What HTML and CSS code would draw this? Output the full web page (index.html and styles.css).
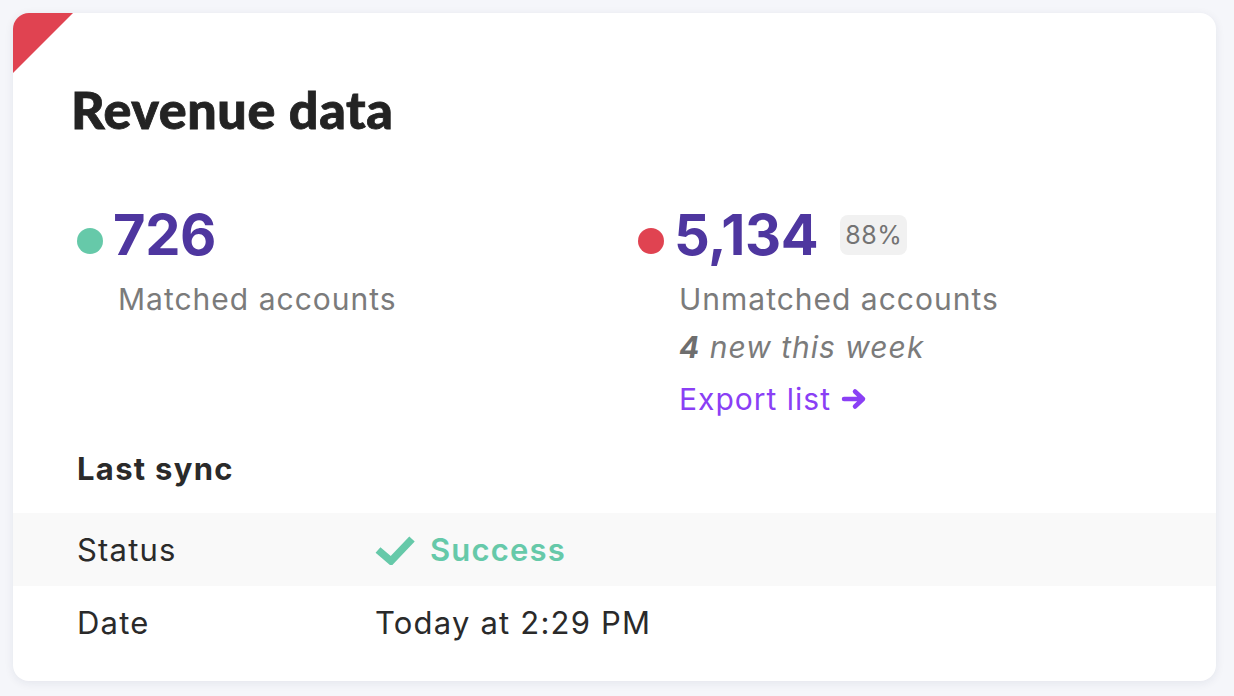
FILE: index.html
```html
<!DOCTYPE html>
<html>
<head>
<meta charset="utf-8">
<link rel="stylesheet" href="styles.css">
</head>
<body>
<div class="card">
  <div class="corner"></div>
  <h1 class="title">Revenue data</h1>
  <div class="stats">
    <div class="stat">
      <div class="stat-head">
        <span class="dot dot-green"></span>
        <span class="num">726</span>
      </div>
      <div class="stat-body">
        <div class="label">Matched accounts</div>
      </div>
    </div>
    <div class="stat">
      <div class="stat-head">
        <span class="dot dot-red"></span>
        <span class="num">5,134</span>
        <span class="badge">88%</span>
      </div>
      <div class="stat-body">
        <div class="label">Unmatched accounts</div>
        <div class="note"><b>4</b> new this week</div>
        <a class="export">Export list <svg class="arrow" width="26" height="22" viewBox="0 0 26 22"><path d="M3 11H22M14 3.5L22 11L14 18.5" fill="none" stroke="#8a3ff5" stroke-width="4.5" stroke-linecap="round" stroke-linejoin="round"/></svg></a>
      </div>
    </div>
  </div>
  <div class="sync-title">Last sync</div>
  <div class="rows">
    <div class="row row-alt">
      <div class="row-label">Status</div>
      <div class="row-value success"><svg class="check" width="40" height="30" viewBox="0 0 40 30"><path d="M3 15L16 26L37 4" fill="none" stroke="#66c9a9" stroke-width="7.5"/></svg>Success</div>
    </div>
    <div class="row">
      <div class="row-label">Date</div>
      <div class="row-value">Today at 2:29 PM</div>
    </div>
  </div>
</div>
</body>
</html>
```
FILE: styles.css
```css
html, body {
  margin: 0;
  padding: 0;
}
body {
  background: #f5f6fa;
  padding: 13px 18px 15px 13px;
  font-family: Inter, "Noto Sans", sans-serif;
}
.card {
  position: relative;
  width: 1203px;
  height: 668px;
  background: #ffffff;
  border-radius: 16px;
  box-shadow: 0 2px 10px rgba(30, 40, 80, 0.08);
  overflow: hidden;
  box-sizing: border-box;
  padding-top: 71px;
}
.corner {
  position: absolute;
  left: 0;
  top: 0;
  width: 0;
  height: 0;
  border-top: 60px solid #e04351;
  border-right: 60px solid transparent;
}
.title {
  margin: 0;
  padding-left: 58px;
  font-family: Lato, sans-serif;
  font-weight: 900;
  font-size: 52px;
  line-height: 50px;
  color: #232323;
  letter-spacing: 0.6px;
  -webkit-text-stroke: 0.8px #232323;
}
.stats {
  display: grid;
  grid-template-columns: 561px 1fr;
  padding-left: 64px;
  margin-top: 79px;
}
.stat-head {
  display: flex;
  align-items: center;
  height: 56px;
}
.dot {
  width: 26px;
  height: 26px;
  border-radius: 50%;
  margin-right: 12px;
  flex: none;
}
.dot-green { background: #66c9a9; }
.dot-red { background: #e04351; }
.num {
  font-size: 56px;
  font-weight: 700;
  color: #4e369f;
  line-height: 56px;
  letter-spacing: -0.4px;
  margin-bottom: 12px;
  margin-left: -2px;
}
.badge {
  margin-left: 22px;
  margin-bottom: 12px;
  background: #f1f1f1;
  color: #737373;
  font-size: 25px;
  line-height: 40px;
  padding: 0 5px;
  border-radius: 8px;
  letter-spacing: 0.5px;
}
.stat-body {
  padding-left: 41px;
  padding-top: 6px;
}
.label, .note, .export {
  font-size: 30px;
  letter-spacing: 1px;
}
.label {
  line-height: 48px;
  color: #7b7b7b;
}
.note {
  line-height: 48px;
  color: #7b7b7b;
  font-style: italic;
}
.note b {
  color: #6e6e6e;
}
.export {
  display: inline-flex;
  align-items: center;
  line-height: 56px;
  color: #8a3ff5;
}
.arrow {
  margin-left: 10px;
}
.sync-title {
  padding-left: 64px;
  font-size: 31px;
  font-weight: 700;
  color: #2a2a2a;
  line-height: 80px;
  letter-spacing: 1.3px;
  margin-top: 2px;
}
.rows {
  display: flex;
  flex-direction: column;
  margin-top: 4px;
}
.row {
  display: flex;
  align-items: center;
  height: 73px;
  padding-left: 64px;
  font-size: 31px;
  letter-spacing: 1.2px;
  color: #2a2a2a;
}
.row-alt {
  background: #f9f9f9;
}
.row-label {
  width: 298px;
}
.row-value {
  display: flex;
  align-items: center;
}
.success {
  color: #66c9a9;
  font-weight: 600;
}
.check {
  margin-right: 15px;
}
```
